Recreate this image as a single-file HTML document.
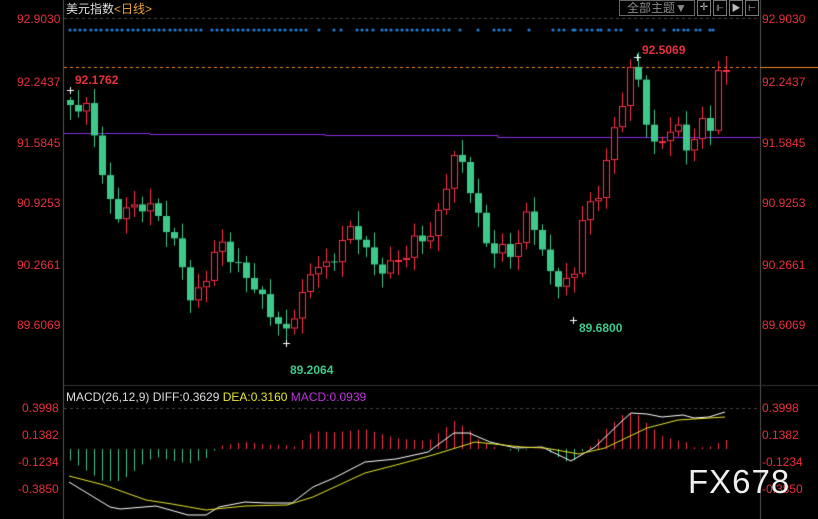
<!DOCTYPE html>
<html><head><meta charset="utf-8"><style>
body{margin:0;background:#000;width:818px;height:519px;overflow:hidden;position:relative;font-family:"Liberation Sans","Noto Sans CJK SC",sans-serif}
canvas{position:absolute;left:0;top:0}
.t{position:absolute;font-size:12px;white-space:nowrap;line-height:14px}
.r{color:#e8303c}
</style></head><body>
<canvas id="c" width="818" height="519"></canvas>
<div class="t" style="left:66px;top:2px;color:#ddd">美元指数<span style="color:#e8a33c">&lt;日线&gt;</span></div>
<div class="t" style="left:619px;top:0px;border:1px solid #666;color:#888;padding:0 7px;height:14px">全部主题▼</div>
<div class="t" style="left:697px;top:0;width:12px;height:14px;border:1px solid #777;color:#bbb;font-size:10px;text-align:center">✛</div>
<div class="t" style="left:713px;top:0;width:12px;height:14px;border:1px solid #777;color:#bbb;font-size:9px;text-align:center">⊩</div>
<div class="t" style="left:729px;top:0;width:12px;height:14px;border:1px solid #777;color:#bbb;font-size:9px;text-align:center">▶</div>
<div class="t" style="left:745px;top:0;width:12px;height:14px;border:1px solid #777;color:#bbb;font-size:9px;text-align:center">⊢</div>
<div class="t r" style="left:17px;top:12px">92.9030</div>
<div class="t r" style="left:17px;top:75px">92.2437</div>
<div class="t r" style="left:17px;top:136px">91.5845</div>
<div class="t r" style="left:17px;top:196px">90.9253</div>
<div class="t r" style="left:17px;top:258px">90.2661</div>
<div class="t r" style="left:17px;top:318px">89.6069</div>
<div class="t r" style="left:762px;top:12px">92.9030</div>
<div class="t r" style="left:762px;top:75px">92.2437</div>
<div class="t r" style="left:762px;top:136px">91.5845</div>
<div class="t r" style="left:762px;top:196px">90.9253</div>
<div class="t r" style="left:762px;top:258px">90.2661</div>
<div class="t r" style="left:762px;top:318px">89.6069</div>
<div class="t r" style="left:75px;top:73px;font-weight:bold">92.1762</div>
<div class="t r" style="left:642px;top:43px;font-weight:bold">92.5069</div>
<div class="t" style="left:290px;top:363px;color:#3ec98a;font-weight:bold">89.2064</div>
<div class="t" style="left:579px;top:321px;color:#3ec98a;font-weight:bold">89.6800</div>
<div class="t" style="left:66px;top:390px;color:#ddd">MACD(26,12,9) DIFF:0.3629 <span style="color:#e6e62a">DEA:0.3160</span> <span style="color:#c030e0">MACD:0.0939</span></div>
<div class="t r" style="left:22px;top:401px">0.3998</div>
<div class="t r" style="left:22px;top:428px">0.1382</div>
<div class="t r" style="left:18px;top:455px">-0.1234</div>
<div class="t r" style="left:18px;top:482px">-0.3850</div>
<div class="t r" style="left:762px;top:401px">0.3998</div>
<div class="t r" style="left:762px;top:428px">0.1382</div>
<div class="t r" style="left:762px;top:455px">-0.1234</div>
<div class="t r" style="left:762px;top:482px">-0.3850</div>
<div class="t" style="left:688px;top:462px;font-size:33px;line-height:40px;color:#eee;letter-spacing:1px">FX678</div>
<script>
const c=document.getElementById('c').getContext('2d');
c.strokeStyle='#555';c.lineWidth=1;
c.beginPath();c.moveTo(63.5,0);c.lineTo(63.5,519);c.moveTo(760.5,0);c.lineTo(760.5,519);c.stroke();
c.strokeStyle='#333';c.beginPath();c.moveTo(64,385.5);c.lineTo(818,385.5);c.stroke();
c.setLineDash([3,3]);c.strokeStyle='#444';
c.beginPath();c.moveTo(64,18.5);c.lineTo(760,18.5);c.moveTo(64,408.5);c.lineTo(760,408.5);c.stroke();
c.strokeStyle='#f08a20';c.beginPath();c.moveTo(64,67.5);c.lineTo(760,67.5);c.stroke();
c.setLineDash([]);c.beginPath();c.moveTo(760,67.5);c.lineTo(818,67.5);c.stroke();
c.strokeStyle='#8a2be2';c.beginPath();c.moveTo(64,133.5);c.lineTo(150,133.5);c.lineTo(150,134.5);c.lineTo(325,134.5);c.lineTo(325,135.5);c.lineTo(498,135.5);c.lineTo(498,137.5);c.lineTo(760,137.5);c.stroke();
c.fillStyle='#1e7fd8';
const dots=[70,75,80,85,91,96,101,107,112,117,122,128,133,138,144,149,154,159,164,170,175,180,186,191,196,201,212,217,222,228,233,238,243,248,254,259,264,269,275,280,285,291,296,301,306,319,334,341,357,362,367,373,382,386,391,397,402,407,412,417,423,428,433,438,444,449,460,478,494,499,504,510,529,553,559,564,573,575,581,587,592,598,601,609,616,621,637,646,652,664,674,678,684,688,696,700,710,713];
for(const x of dots){c.beginPath();c.arc(x,30,1.6,0,7);c.fill();}
const kp=[[70,105],[90,110],[100,165],[108,200],[115,215],[125,210],[140,205],[155,210],[170,235],[185,270],[190,300],[200,290],[210,265],[220,240],[235,265],[250,280],[262,300],[275,320],[285,335],[295,310],[305,290],[315,260],[330,270],[345,230],[360,235],[375,270],[390,265],[405,255],[415,240],[430,235],[440,210],[450,165],[458,150],[465,175],[475,200],[480,230],[490,250],[505,250],[515,255],[525,215],[535,225],[545,265],[555,280],[565,285],[575,270],[583,210],[595,205],[610,145],[620,110],[628,70],[637,75],[643,105],[652,150],[660,140],[670,130],[680,130],[690,155],[700,120],[710,125],[718,75],[726,70]];
function interp(a,x){for(let k=0;k<a.length-1;k++){if(x<=a[k+1][0]){const p=a[k],q=a[k+1];return p[1]+(q[1]-p[1])*(x-p[0])/(q[0]-p[0]);}}return a[a.length-1][1];}
const N=83;let prev=100;
for(let i=0;i<N;i++){const x=Math.round(70+i*8);let y=interp(kp,x)+Math.sin(i*2.3)*6;if(i==N-1)y=70;const o=prev;
 const top=Math.min(o,y),bot=Math.max(o,y);const hi=top-3-Math.abs(Math.sin(i*1.7))*12,lo=bot+3+Math.abs(Math.cos(i*1.3))*12;
 const up=y<o;c.strokeStyle=up?'#ff3048':'#3ec98a';c.fillStyle='#3ec98a';
 c.beginPath();c.moveTo(x+0.5,hi);c.lineTo(x+0.5,lo);c.stroke();
 const h=Math.max(bot-top,1);
 if(up){c.fillStyle='#000';c.fillRect(x-3,top,7,h);c.strokeRect(x-2.5,top+0.5,6,Math.max(h-1,1));}else{c.fillRect(x-3,top,7,h);}
 prev=y;}
c.strokeStyle='#fff';c.beginPath();c.moveTo(67,90.5);c.lineTo(74,90.5);c.moveTo(70.5,87);c.lineTo(70.5,94);
c.moveTo(283,343.5);c.lineTo(290,343.5);c.moveTo(286.5,340);c.lineTo(286.5,347);
c.moveTo(570,320.5);c.lineTo(577,320.5);c.moveTo(573.5,317);c.lineTo(573.5,324);
c.moveTo(634,57.5);c.lineTo(641,57.5);c.moveTo(637.5,54);c.lineTo(637.5,61);c.stroke();
const W=[[69,482],[110,507],[120,509],[156,506],[188,515],[206,515],[219,507],[245,502],[266,503],[292,503],[313,487],[334,478],[365,462],[396,459],[428,452],[454,433],[469,433],[490,442],[516,448],[542,447],[571,461],[595,447],[621,422],[631,413],[647,414],[662,417],[683,415],[694,418],[709,417],[725,412]];
const Y=[[69,476],[104,485],[146,500],[172,504],[206,510],[245,506],[287,505],[313,497],[365,473],[396,465],[433,455],[475,442],[522,447],[545,448],[579,454],[605,448],[647,428],[678,420],[694,419],[725,417]];
for(let i=0;i<N;i++){const x=70+i*8;const d=interp(Y,x)-interp(W,x);let len=d*1.8;len=Math.max(-32,Math.min(36,len));c.strokeStyle=len>=0?'#ff3048':'#3ec98a';c.beginPath();c.moveTo(x+0.5,449);c.lineTo(x+0.5,449-len);c.stroke();}
function line(a,col){c.strokeStyle=col;c.beginPath();a.forEach((p,i)=>i?c.lineTo(p[0],p[1]):c.moveTo(p[0],p[1]));c.stroke();}
line(W,'#fff');line(Y,'#e6e62a');
</script>
</body></html>
